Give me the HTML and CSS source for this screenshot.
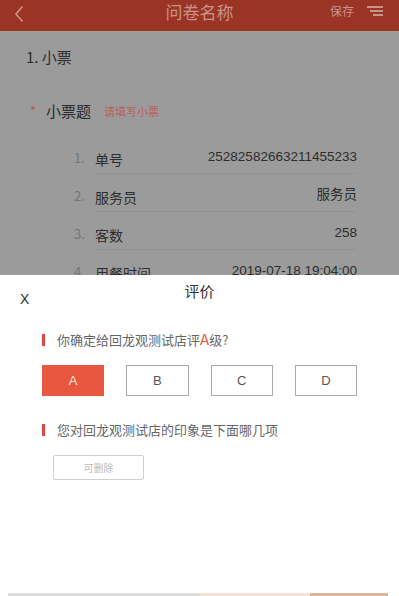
FILE: index.html
```html
<!DOCTYPE html>
<html lang="zh-CN">
<head>
<meta charset="utf-8">
<title>问卷名称</title>
<link rel="stylesheet" href="styles.css">
</head>
<body>
<div class="screen">
  <div class="status-strip"></div>
  <header class="topbar">
    <svg class="back" width="10" height="18" viewBox="0 0 10 18"><path d="M8.5 1.5 L2 9 L8.5 16.5" fill="none" stroke="#c99389" stroke-width="1.6"/></svg>
    <div class="title">问卷名称</div>
    <div class="actions">
      <span class="save">保存</span>
      <svg class="menu" width="18" height="12" viewBox="0 0 18 12"><path d="M1 2 H17 M4 6 H17 M7 10 H17" stroke="#c99389" stroke-width="2" fill="none"/></svg>
    </div>
  </header>
  <main class="page">
    <div class="section-title">1. 小票</div>
    <div class="question">
      <span class="req">*</span>
      <span class="q-name">小票题</span>
      <span class="q-hint">请填写小票</span>
    </div>
    <ul class="rows">
      <li class="row"><span class="num">1.</span><span class="label">单号</span><span class="value">25282582663211455233</span></li>
      <li class="row"><span class="num">2.</span><span class="label">服务员</span><span class="value">服务员</span></li>
      <li class="row"><span class="num">3.</span><span class="label">客数</span><span class="value">258</span></li>
      <li class="row"><span class="num">4.</span><span class="label">用餐时间</span><span class="value">2019-07-18 19:04:00</span></li>
    </ul>
  </main>

  <section class="sheet">
    <div class="sheet-head">
      <span class="close">X</span>
      <span class="sheet-title">评价</span>
    </div>
    <div class="ask"><span class="bar"></span><span>你确定给回龙观测试店评<em>A</em>级?</span></div>
    <div class="grades">
      <div class="grade active">A</div>
      <div class="grade">B</div>
      <div class="grade">C</div>
      <div class="grade">D</div>
    </div>
    <div class="ask ask2"><span class="bar"></span><span>您对回龙观测试店的印象是下面哪几项</span></div>
    <div class="tag">可删除</div>
    <div class="sheet-foot">
      <span class="f1"></span><span class="f2"></span><span class="f3"></span>
    </div>
  </section>
</div>
</body>
</html>
```
FILE: styles.css
```css
* { box-sizing: border-box; margin: 0; padding: 0; }
html, body { width: 399px; height: 596px; overflow: hidden; }
body {
  font-family: "Noto Sans CJK SC", "Noto Sans", "Liberation Sans", sans-serif;
  background: #9b9b9b;
}
.screen { position: relative; width: 399px; height: 596px; overflow: hidden; background: #9b9b9b; }
.status-strip { position: absolute; left: 0; top: 0; width: 226px; height: 2px; background: #fff; }
.topbar {
  height: 32px;
  background: #9a3526;
  border-bottom: 1px solid #a59e9d;
  display: flex;
  align-items: flex-start;
  padding: 0 14px;
  position: relative;
}
.back { margin-top: 5px; }
.title {
  position: absolute; left: 0; right: 0; top: 0;
  text-align: center;
  font-size: 17px; line-height: 24px;
  color: #c99389;
}
.actions { margin-left: auto; display: flex; align-items: center; gap: 12px; margin-top: 3px; margin-right: 1px; }
.save { font-size: 12px; line-height: 16px; color: #c99389; }

.section-title {
  font-size: 15px; line-height: 20px; color: #2e2e2e;
  padding: 15px 0 0 26px;
}
.question {
  display: flex; align-items: center;
  padding: 34px 0 0 30px;
  height: 54px;
}
.req { color: #b8575a; font-size: 13px; width: 16px; line-height: 18px; }
.q-name { font-size: 15px; color: #2a2a2a; line-height: 20px; }
.q-hint { font-size: 11px; color: #bb5d5f; margin-left: 13px; line-height: 16px; }
.rows { list-style: none; padding: 15px 42px 0 74px; }
.row {
  display: flex; align-items: flex-start;
  padding: 12px 0 5px;
  position: relative;
  height: 38px;
}
.row::after {
  content: ""; position: absolute; left: 21px; right: 0; bottom: 0;
  height: 1px; background: #929292;
}
.num { width: 21px; font-size: 13px; line-height: 20px; color: #767676; }
.label { font-size: 14px; line-height: 20px; color: #2d2d2d; margin-top: 1px; }
.value { margin-left: auto; font-size: 13.5px; line-height: 18px; color: #2d2d2d; font-family: "Liberation Sans", "Noto Sans CJK SC", sans-serif; }

.sheet {
  position: absolute; left: 0; right: 0; top: 275px; bottom: 0;
  background: #fff;
}
.sheet-head { position: relative; height: 40px; }
.close {
  position: absolute; left: 20px; top: 15px;
  font-family: "Liberation Sans", sans-serif;
  font-size: 14px; line-height: 18px; color: #333;
}
.sheet-title {
  display: block; text-align: center;
  font-size: 15px; line-height: 20px; color: #333;
  padding-top: 6px;
}
.ask {
  display: flex; align-items: center;
  margin: 15px 0 0 42px;
  font-size: 13px; line-height: 18px; color: #666;
}
.ask em { font-style: normal; color: #ee5a44; font-size: 15px; }
.bar { width: 3px; height: 12px; background: #e2453b; margin-right: 12px; }
.grades {
  display: grid; grid-template-columns: repeat(4, 1fr); column-gap: 22px;
  margin: 16px 42px 0 42px;
}
.grade {
  height: 31px; border: 1px solid #a9a9a9;
  display: flex; align-items: center; justify-content: center;
  font-family: "Liberation Sans", sans-serif;
  font-size: 13px; color: #555;
}
.grade.active { background: #e8573f; border-color: #e8573f; color: #fde0d8; }
.ask2 { margin-top: 25px; }
.tag {
  width: 91px; height: 25px; margin: 16px 0 0 53px;
  border: 1px solid #cfcfcf; border-radius: 2px;
  display: flex; align-items: center; justify-content: center;
  font-size: 10px; color: #bdbdbd;
}
.sheet-foot {
  position: absolute; left: 8px; right: 11px; bottom: 0; height: 3px;
  display: flex;
}
.f1 { width: 192px; background: #dedede; }
.f2 { width: 110px; background: #f7e2d6; }
.f3 { flex: 1; background: #dcb79b; }
```
